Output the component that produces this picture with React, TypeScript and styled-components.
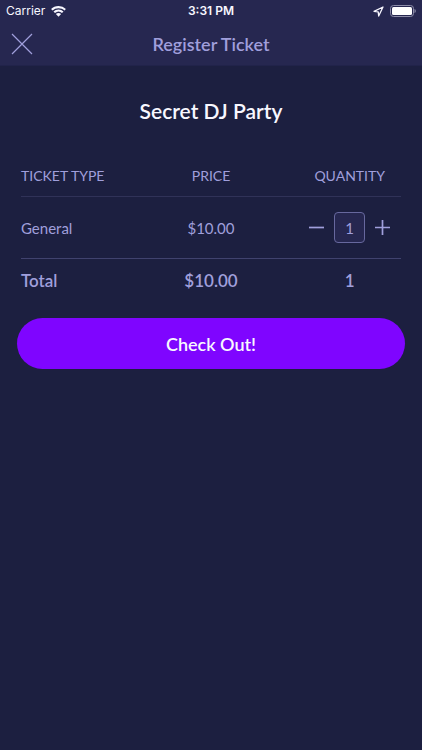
import React, { useState } from 'react';
import styled, { createGlobalStyle } from 'styled-components';

const colors = {
  page: '#1c1f40',
  bar: '#262750',
  text: '#a09fdc',
  white: '#f8f7ff',
  accent: '#7f05ff',
};

const GlobalStyle = createGlobalStyle`
  *, *::before, *::after { box-sizing: border-box; }
  body {
    margin: 0;
    background: ${colors.page};
    color: ${colors.text};
    font-family: Lato, sans-serif;
    -webkit-font-smoothing: antialiased;
  }
  button, input { font: inherit; color: inherit; }
`;

const Screen = styled.div`
  min-height: 100vh;
  background: ${colors.page};
`;

const Header = styled.header`
  background: ${colors.bar};
  border-bottom: 1px solid #21234a;
`;

const StatusBar = styled.div`
  display: grid;
  grid-template-columns: 1fr auto 1fr;
  align-items: center;
  height: 22px;
  padding: 0 6px;
  color: ${colors.white};
  font: 400 12px/22px Inter, sans-serif;
`;

const StatusGroup = styled.div<{ $end?: boolean }>`
  display: flex;
  align-items: center;
  justify-content: ${(p) => (p.$end ? 'flex-end' : 'flex-start')};
  gap: 6px;
`;

const Clock = styled.time`
  font-weight: 600;
`;

const NavBar = styled.div`
  display: grid;
  grid-template-columns: 44px 1fr 44px;
  align-items: center;
  height: 43px;
`;

const IconButton = styled.button`
  display: flex;
  align-items: center;
  justify-content: center;
  padding: 0;
  border: 0;
  background: none;
  cursor: pointer;
`;

const NavTitle = styled.h1`
  margin: 0;
  text-align: center;
  font-size: 18px;
  font-weight: 600;
  line-height: 24px;
`;

const Content = styled.main`
  padding: 30px 17px 0;
`;

const EventName = styled.h2`
  margin: 0 0 30px;
  color: ${colors.white};
  text-align: center;
  font-size: 21px;
  font-weight: 600;
  line-height: 30px;
`;

const TableArea = styled.div`
  padding: 0 4px;
`;

const TicketTable = styled.table`
  width: 100%;
  table-layout: fixed;
  border-collapse: separate;
  border-spacing: 0;
`;

const Column = styled.col<{ $width: string }>`
  width: ${(p) => p.$width};
`;

const HeadCell = styled.th<{ $left?: boolean }>`
  height: 41px;
  padding: 0 0 2px;
  border-bottom: 1px solid #303258;
  font-size: 14px;
  font-weight: 400;
  text-align: ${(p) => (p.$left ? 'left' : 'center')};
  white-space: nowrap;
`;

const Cell = styled.td<{ $left?: boolean }>`
  height: 62px;
  padding: 0;
  border-bottom: 1px solid #40426e;
  font-size: 15px;
  text-align: ${(p) => (p.$left ? 'left' : 'center')};
`;

const TotalCell = styled.td<{ $left?: boolean }>`
  height: 44px;
  padding: 0 0 2px;
  font-size: 17px;
  font-weight: 600;
  text-align: ${(p) => (p.$left ? 'left' : 'center')};
`;

const Stepper = styled.div`
  display: flex;
  align-items: center;
  justify-content: center;
  gap: 9px;
`;

const QuantityInput = styled.input`
  width: 31px;
  height: 31px;
  padding: 0;
  border: 1px solid #67689e;
  border-radius: 4px;
  background: ${colors.bar};
  text-align: center;
`;

const CheckOutButton = styled.button`
  display: block;
  width: 100%;
  height: 51px;
  margin-top: 15px;
  padding: 0;
  border: 0;
  border-radius: 26px;
  background: ${colors.accent};
  color: ${colors.white};
  font-size: 18px;
  font-weight: 600;
  cursor: pointer;
`;

const WifiIcon = () => (
  <svg width="15" height="11" viewBox="0 0 15 11" fill="currentColor" aria-hidden="true">
    <path d="M7.5 0C4.6 0 2 1.1.1 2.9l1.4 1.6A8.700 8.700 0 0 1 7.5 2.200c2.300 0 4.400.9 6 2.300l1.400-1.600A10.800 10.800 0 0 0 7.500 0Z" />
    <path d="M7.5 3.400c-2 0-3.700.8-5 2l1.500 1.700a5.200 5.200 0 0 1 7 0l1.500-1.700a7.200 7.200 0 0 0-5-2Z" />
    <path d="M7.5 6.900c-1 0-1.900.4-2.600 1L7.500 10.700l2.600-2.800c-.7-.6-1.600-1-2.600-1Z" />
  </svg>
);

const LocationIcon = () => (
  <svg width="11" height="11" viewBox="0 0 11 11" fill="none" aria-hidden="true">
    <path d="M10 1 1 5.300l4.200.500.500 4.200Z" stroke="currentColor" strokeWidth="1.300" strokeLinejoin="round" />
  </svg>
);

const BatteryIcon = () => (
  <svg width="26" height="12" viewBox="0 0 26 12" aria-hidden="true">
    <rect x=".5" y=".5" width="23" height="11" rx="3" fill="none" stroke="#8d8da9" />
    <rect x="2" y="2" width="20" height="8" rx="1.500" fill="#fff" />
    <path d="M24.500 4c1.700.6 1.700 3.400 0 4Z" fill="#8d8da9" />
  </svg>
);

const CloseIcon = () => (
  <svg width="22" height="22" viewBox="0 0 22 22" aria-hidden="true">
    <path d="m1 1 20 20M21 1 1 21" fill="none" stroke="currentColor" strokeWidth="1.200" />
  </svg>
);

const StepIcon = ({ plus }: { plus?: boolean }) => (
  <svg width="17" height="17" viewBox="0 0 17 17" aria-hidden="true">
    <path d={plus ? 'M1 8.500h15M8.500 1v15' : 'M1 8.500h15'} fill="none" stroke="currentColor" strokeWidth="1.700" />
  </svg>
);

const PRICE = 10;

export default function App() {
  const [quantity, setQuantity] = useState(1);
  const total = `$${(PRICE * quantity).toFixed(2)}`;

  return (
    <Screen>
      <GlobalStyle />
      <Header>
        <StatusBar>
          <StatusGroup>
            <span>Carrier</span>
            <WifiIcon />
          </StatusGroup>
          <Clock>3:31 PM</Clock>
          <StatusGroup $end>
            <LocationIcon />
            <BatteryIcon />
          </StatusGroup>
        </StatusBar>
        <NavBar>
          <IconButton type="button" aria-label="Close">
            <CloseIcon />
          </IconButton>
          <NavTitle>Register Ticket</NavTitle>
        </NavBar>
      </Header>
      <Content>
        <EventName>Secret DJ Party</EventName>
        <TableArea>
          <TicketTable>
            <colgroup>
              <Column $width="27%" />
              <Column $width="46%" />
              <Column $width="27%" />
            </colgroup>
            <thead>
              <tr>
                <HeadCell $left scope="col">TICKET TYPE</HeadCell>
                <HeadCell scope="col">PRICE</HeadCell>
                <HeadCell scope="col">QUANTITY</HeadCell>
              </tr>
            </thead>
            <tbody>
              <tr>
                <Cell $left>General</Cell>
                <Cell>$10.00</Cell>
                <Cell>
                  <Stepper>
                    <IconButton
                      type="button"
                      aria-label="Decrease quantity"
                      onClick={() => setQuantity(Math.max(0, quantity - 1))}
                    >
                      <StepIcon />
                    </IconButton>
                    <QuantityInput
                      aria-label="General ticket quantity"
                      inputMode="numeric"
                      value={quantity}
                      onChange={(e) => setQuantity(Number(e.target.value.replace(/\D/g, '')))}
                    />
                    <IconButton
                      type="button"
                      aria-label="Increase quantity"
                      onClick={() => setQuantity(quantity + 1)}
                    >
                      <StepIcon plus />
                    </IconButton>
                  </Stepper>
                </Cell>
              </tr>
            </tbody>
            <tfoot>
              <tr>
                <TotalCell $left>Total</TotalCell>
                <TotalCell>{total}</TotalCell>
                <TotalCell>{quantity}</TotalCell>
              </tr>
            </tfoot>
          </TicketTable>
        </TableArea>
        <CheckOutButton type="button">Check Out!</CheckOutButton>
      </Content>
    </Screen>
  );
}
